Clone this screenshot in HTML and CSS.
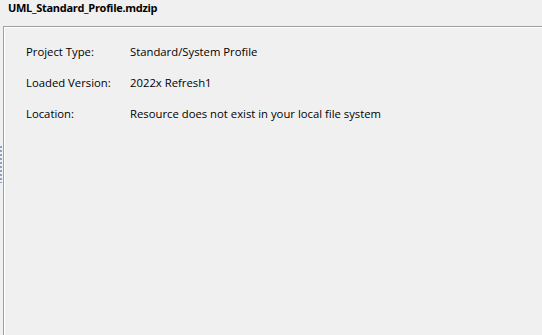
FILE: index.html
```html
<!DOCTYPE html>
<html lang="en">
<head>
    <title>UML_Standard_Profile.mdzip</title>
    <link rel="stylesheet" href="styles.css">
</head>
<body>
    <div class="title">UML_Standard_Profile.mdzip</div>
    <div class="main">
        <div class="grip"></div>
        <div class="panel">
            <div class="row">
                <span class="label">Project Type:</span>
                <span class="value">Standard/System Profile</span>
            </div>
            <div class="row">
                <span class="label">Loaded Version:</span>
                <span class="value">2022x Refresh1</span>
            </div>
            <div class="row">
                <span class="label">Location:</span>
                <span class="value">Resource does not exist in your local file system</span>
            </div>
        </div>
    </div>
</body>
</html>
```

FILE: styles.css
```css
body {
    margin: 0px;
    background-color: #f0f0f0;
    font-family: "Open Sans", "Noto Sans", sans-serif;
    font-size: 11.3px;
    color: #000000;
    height: 335px;
    overflow: hidden;
}
.title {
    height: 26px;
    padding-left: 8px;
    line-height: 16px;
    font-size: 11px;
    letter-spacing: -0.3px;
    font-weight: bold;
}
.main {
    display: flex;
    height: 309px;
}
.grip {
    width: 3px;
    height: 37px;
    margin-top: 120px;
    background: repeating-linear-gradient(to bottom, #8aa3c2 0px, #8aa3c2 2px, transparent 2px, transparent 4px);
    background-size: 2px 100%;
    background-repeat: no-repeat;
}
.panel {
    flex: 1;
    border-top: 1px solid #a0a0a0;
    border-left: 1px solid #a0a0a0;
    box-shadow: inset 1px 1px 0 #ffffff;
    padding: 16px 0 0 22px;
}
.row {
    display: flex;
    height: 31px;
    line-height: 18px;
}
.label {
    width: 104px;
}
```
